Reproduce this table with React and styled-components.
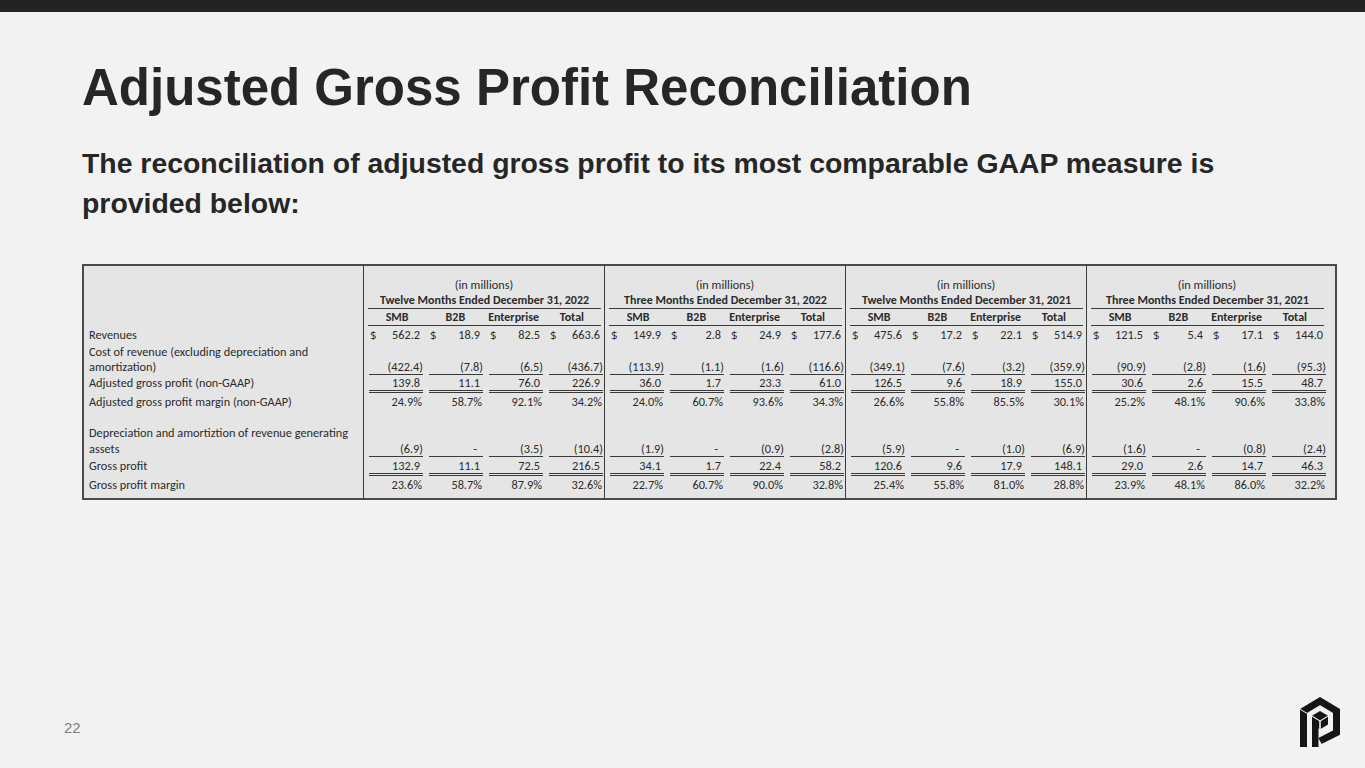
import React from 'react';
import styled, { createGlobalStyle } from 'styled-components';

const GlobalStyle = createGlobalStyle`
  html, body {
    margin: 0;
    padding: 0;
    background: #f2f2f2;
  }
  * {
    box-sizing: border-box;
  }
`;

// shared row heights so the label column and every group line up
const ROWS = [16, 17, 17, 17, 16, 16, 18, 16, 15, 16, 17, 19, 16];

const groups = [
  {
    title: 'Twelve Months Ended December 31, 2022',
    rev: ['562.2', '18.9', '82.5', '663.6'],
    cost: ['(422.4)', '(7.8)', '(6.5)', '(436.7)'],
    agp: ['139.8', '11.1', '76.0', '226.9'],
    agpm: ['24.9%', '58.7%', '92.1%', '34.2%'],
    dep: ['(6.9)', '-', '(3.5)', '(10.4)'],
    gp: ['132.9', '11.1', '72.5', '216.5'],
    gpm: ['23.6%', '58.7%', '87.9%', '32.6%'],
  },
  {
    title: 'Three Months Ended December 31, 2022',
    rev: ['149.9', '2.8', '24.9', '177.6'],
    cost: ['(113.9)', '(1.1)', '(1.6)', '(116.6)'],
    agp: ['36.0', '1.7', '23.3', '61.0'],
    agpm: ['24.0%', '60.7%', '93.6%', '34.3%'],
    dep: ['(1.9)', '-', '(0.9)', '(2.8)'],
    gp: ['34.1', '1.7', '22.4', '58.2'],
    gpm: ['22.7%', '60.7%', '90.0%', '32.8%'],
  },
  {
    title: 'Twelve Months Ended December 31, 2021',
    rev: ['475.6', '17.2', '22.1', '514.9'],
    cost: ['(349.1)', '(7.6)', '(3.2)', '(359.9)'],
    agp: ['126.5', '9.6', '18.9', '155.0'],
    agpm: ['26.6%', '55.8%', '85.5%', '30.1%'],
    dep: ['(5.9)', '-', '(1.0)', '(6.9)'],
    gp: ['120.6', '9.6', '17.9', '148.1'],
    gpm: ['25.4%', '55.8%', '81.0%', '28.8%'],
  },
  {
    title: 'Three Months Ended December 31, 2021',
    rev: ['121.5', '5.4', '17.1', '144.0'],
    cost: ['(90.9)', '(2.8)', '(1.6)', '(95.3)'],
    agp: ['30.6', '2.6', '15.5', '48.7'],
    agpm: ['25.2%', '48.1%', '90.6%', '33.8%'],
    dep: ['(1.6)', '-', '(0.8)', '(2.4)'],
    gp: ['29.0', '2.6', '14.7', '46.3'],
    gpm: ['23.9%', '48.1%', '86.0%', '32.2%'],
  },
];

const heads = ['SMB', 'B2B', 'Enterprise', 'Total'];

function kindOf(v) {
  if (v === '-') return 'dash';
  if (v.startsWith('(')) return 'neg';
  if (v.endsWith('%')) return 'pct';
  return 'pos';
}

function Logo() {
  return (
    <svg width="46" height="56" viewBox="0 0 46 56">
      <path
        d="M6.5 51 L6.5 15 L23 5 L39.5 15 L39.5 36.5 L23 45"
        fill="none"
        stroke="#151515"
        strokeWidth="7"
        strokeLinejoin="miter"
      />
      <line x1="2.5" y1="13" x2="10.5" y2="17.6" stroke="#f2f2f2" strokeWidth="1" />
      <rect x="15" y="27" width="6.5" height="24" fill="#151515" />
      <polygon points="23,15 31,19.8 23,24.6 15,19.8" fill="#151515" />
      <polygon points="15,20.6 22.4,25 22.4,33 15,28.6" fill="#151515" />
      <polygon points="23.6,25 31,20.6 31,28.6 23.6,33" fill="#151515" />
      <line x1="15" y1="20.2" x2="23" y2="25" stroke="#f2f2f2" strokeWidth="0.9" />
      <line x1="23" y1="25" x2="31" y2="20.2" stroke="#f2f2f2" strokeWidth="0.9" />
      <line x1="23" y1="25" x2="23" y2="33.5" stroke="#f2f2f2" strokeWidth="0.9" />
    </svg>
  );
}

function Amount({ value, dollar, line }) {
  return (
    <Cell $line={line} $kind={kindOf(value)}>
      <Dollar>{dollar ? '$' : ''}</Dollar>
      <span>{value}</span>
    </Cell>
  );
}

function Group({ data, last }) {
  return (
    <GroupCol $last={last}>
      <Caption>(in millions)</Caption>
      <PeriodTitle>{data.title}</PeriodTitle>
      <HeadRow>
        {heads.map((h) => (
          <span key={h}>{h}</span>
        ))}
      </HeadRow>
      {data.rev.map((v, i) => (
        <Amount key={'r' + i} value={v} dollar />
      ))}
      <Blank />
      {data.cost.map((v, i) => (
        <Amount key={'c' + i} value={v} line="single" />
      ))}
      {data.agp.map((v, i) => (
        <Amount key={'a' + i} value={v} line="double" />
      ))}
      {data.agpm.map((v, i) => (
        <Amount key={'m' + i} value={v} />
      ))}
      <Blank />
      <Blank />
      {data.dep.map((v, i) => (
        <Amount key={'d' + i} value={v} line="single" />
      ))}
      {data.gp.map((v, i) => (
        <Amount key={'g' + i} value={v} line="double" />
      ))}
      {data.gpm.map((v, i) => (
        <Amount key={'p' + i} value={v} />
      ))}
    </GroupCol>
  );
}

export default function App() {
  return (
    <Page>
      <GlobalStyle />
      <TopBar />
      <Main>
        <Title>Adjusted Gross Profit Reconciliation</Title>
        <Subtitle>
          The reconciliation of adjusted gross profit to its most comparable GAAP measure is
          provided below:
        </Subtitle>
        <Table>
          <LabelCol>
            <Label />
            <Label />
            <Label />
            <Label>Revenues</Label>
            <Label>Cost of revenue (excluding depreciation and</Label>
            <Label $line="single">amortization)</Label>
            <Label $line="double">Adjusted gross profit (non-GAAP)</Label>
            <Label>Adjusted gross profit margin (non-GAAP)</Label>
            <Label />
            <Label>Depreciation and amortiztion of revenue generating</Label>
            <Label $line="single">assets</Label>
            <Label $line="double">Gross profit</Label>
            <Label>Gross profit margin</Label>
          </LabelCol>
          {groups.map((g, i) => (
            <Group key={g.title} data={g} last={i === groups.length - 1} />
          ))}
        </Table>
      </Main>
      <Footer>
        <PageNum>22</PageNum>
        <Logo />
      </Footer>
    </Page>
  );
}

const Page = styled.div`
  display: flex;
  flex-direction: column;
  width: 1365px;
  height: 768px;
  background: #f2f2f2;
  overflow: hidden;
`;

const TopBar = styled.div`
  height: 12px;
  background: #232323;
  flex-shrink: 0;
`;

const Main = styled.div`
  padding: 0 28px 0 82px;
`;

const Title = styled.h1`
  margin: 50px 0 0;
  font-family: 'Liberation Sans', Arial, sans-serif;
  font-weight: bold;
  font-size: 51px;
  line-height: 51px;
  color: #262626;
`;

const Subtitle = styled.h2`
  margin: 30px 0 0;
  max-width: 1180px;
  font-family: 'Liberation Sans', Arial, sans-serif;
  font-weight: bold;
  font-size: 28.4px;
  line-height: 40px;
  color: #262626;
`;

const Table = styled.div`
  display: flex;
  width: 1255px;
  margin-top: 41px;
  border: 2px solid #4a4a4a;
  background: #e5e5e5;
  font-family: Carlito, Calibri, Lato, sans-serif;
  font-size: 12.3px;
  color: #2b2b2b;
`;

const LabelCol = styled.div`
  flex: 1;
  display: grid;
  grid-template-rows: ${ROWS.map((h) => h + 'px').join(' ')};
  padding: 10px 0 6px 5px;
`;

const lineStyle = (line, color) => {
  if (line === 'single') return `border-bottom: 1px solid ${color};`;
  if (line === 'double') return `border-bottom: 3px double ${color};`;
  return '';
};

const Label = styled.div`
  display: flex;
  align-items: center;
  white-space: nowrap;
  ${(p) => lineStyle(p.$line, 'transparent')}
`;

const GroupCol = styled.div`
  width: ${(p) => (p.$last ? 249 : 241)}px;
  display: grid;
  grid-template-columns: repeat(4, 60px);
  grid-template-rows: ${ROWS.map((h) => h + 'px').join(' ')};
  align-content: start;
  padding: 10px ${(p) => (p.$last ? 8 : 0)}px 6px 0;
  border-left: 1px solid #3a3a3a;
`;

const Caption = styled.div`
  grid-column: 1 / -1;
  display: flex;
  align-items: center;
  justify-content: center;
`;

const PeriodTitle = styled.div`
  grid-column: 1 / -1;
  display: flex;
  align-items: center;
  justify-content: center;
  margin: 0 3px 0 4px;
  font-size: 12px;
  font-weight: bold;
  border-bottom: 1px solid #3a3a3a;
  white-space: nowrap;
`;

const HeadRow = styled.div`
  grid-column: 1 / -1;
  display: grid;
  grid-template-columns: repeat(4, 1fr);
  align-items: center;
  margin: 0 3px 0 4px;
  font-size: 12px;
  font-weight: bold;
  border-bottom: 1px solid #3a3a3a;
  text-align: center;
`;

const Blank = styled.div`
  grid-column: 1 / -1;
`;

const padFor = {
  pos: 3,
  neg: 0,
  pct: 1,
  dash: 6,
};

const Cell = styled.div`
  display: flex;
  align-items: center;
  justify-content: space-between;
  margin: 0 1px 0 5px;
  padding: 0 ${(p) => padFor[p.$kind]}px 0 1px;
  white-space: nowrap;
  ${(p) => lineStyle(p.$line, '#3a3a3a')}
`;

const Dollar = styled.span`
  font-family: 'Open Sans', sans-serif;
  font-size: 11.5px;
`;

const Footer = styled.div`
  margin-top: auto;
  display: flex;
  align-items: center;
  justify-content: space-between;
  padding: 0 22px 16px 64px;
`;

const PageNum = styled.div`
  padding-top: 6px;
  font-family: 'Liberation Sans', Arial, sans-serif;
  font-size: 15px;
  color: #7f7f7f;
`;
